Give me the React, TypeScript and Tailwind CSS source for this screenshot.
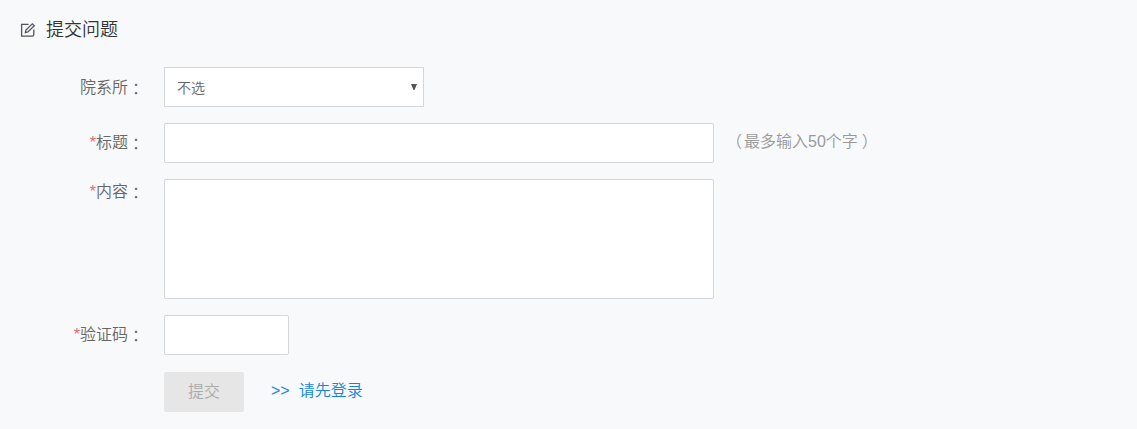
import type { ReactNode } from "react";

function EditIcon() {
  return (
    <svg width="16" height="16" viewBox="0 0 16 16" fill="none" stroke="#4f565d" strokeWidth="1.3">
      <path d="M8.6 2.3H1.6v11.9h10.6q1.6 0 1.6-1.6V7.5" />
      <path d="M5.4 10.6l.5-2.6 6.4-6.2 2 2L7.9 10z" />
    </svg>
  );
}

function Label({ children, required }: { children: ReactNode; required?: boolean }) {
  return (
    <div className={`w-[144px] shrink-0 whitespace-nowrap text-right leading-6 ${required ? "-mt-0.5" : "-mt-px"}`}>
      {required && <span className="text-[#f0686a]">*</span>}
      {children}
      <span className="relative top-0.5 font-['Noto_Sans_CJK_TC',sans-serif]">：</span>
    </div>
  );
}

const field = "block rounded-xs border border-[#d4d6d9] bg-white outline-none";

export default function App() {
  return (
    <form
      onSubmit={(e) => e.preventDefault()}
      className="h-[429px] overflow-hidden bg-[#f8f9fb] pt-4 font-['Liberation_Sans','Noto_Sans_CJK_SC',sans-serif] text-base font-[350] text-[#666]"
    >
      <h1 className="flex h-[27px] items-center gap-[10px] pl-5 text-lg font-[350] text-[#333]">
        <EditIcon />
        <span className="pt-0.5 leading-[27px]">提交问题</span>
      </h1>

      <div className="mt-6 flex h-10 items-center gap-5">
        <Label>院系所</Label>
        <div className="flex h-10 w-[260px] items-center justify-between border border-[#d4d6d9] bg-white pl-3 pr-[6px] text-sm">
          <span className="pt-0.5">不选</span>
          <svg width="6" height="6" viewBox="0 0 6 6" className="mb-px">
            <path d="M0 0h6L3.5 6h-1z" fill="#555" />
          </svg>
        </div>
      </div>

      <div className="mt-4 flex h-10 items-center">
        <Label required>标题</Label>
        <input className={`${field} ml-5 h-10 w-[550px]`} />
        <span className="-mt-[3px] ml-[14px] flex text-[#999]">
          <span className="relative -left-0.5">（</span>
          <span>最多输入50个字</span>
          <span className="relative left-1">）</span>
        </span>
      </div>

      <div className="mt-4 flex items-start gap-5">
        <div className="pt-px">
          <Label required>内容</Label>
        </div>
        <textarea className={`${field} h-[120px] w-[550px] resize-none`} />
      </div>

      <div className="mt-4 flex h-10 items-center gap-5">
        <Label required>验证码</Label>
        <input className={`${field} h-10 w-[125px]`} />
      </div>

      <div className="mt-[17px] flex h-10 items-center pl-[164px]">
        <button disabled className="h-10 w-20 rounded-xs bg-[#e6e6e6] text-[#aaa]">
          提交
        </button>
        <a href="#" className="-mt-0.5 ml-[27px] flex gap-[9px] text-[#1584e0]">
          <span>&gt;&gt;</span>
          <span>请先登录</span>
        </a>
      </div>
    </form>
  );
}
